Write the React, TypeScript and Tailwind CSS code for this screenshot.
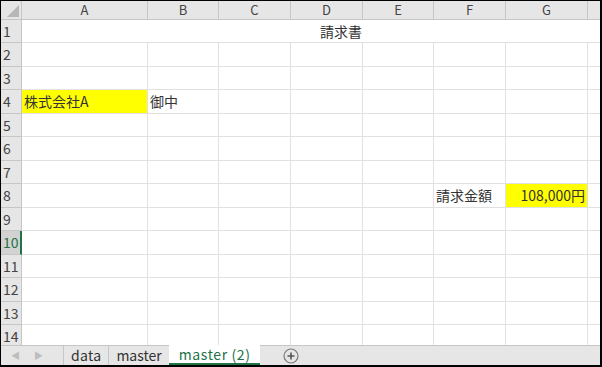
import React from "react";

const cols = [
  { name: "A", w: "w-[126px]" },
  { name: "B", w: "w-[71px]" },
  { name: "C", w: "w-[72px]" },
  { name: "D", w: "w-[72px]" },
  { name: "E", w: "w-[71px]" },
  { name: "F", w: "w-[72px]" },
  { name: "G", w: "w-[82px]" },
  { name: "", w: "w-[40px]" },
];

const font = "font-['Noto_Sans_CJK_JP','Noto_Sans',sans-serif]";

function Corner() {
  return (
    <div className="w-[21px] h-[19px] shrink-0 bg-[#e6e6e6] border-r border-b border-[#c6c6c6] relative">
      <svg className="absolute right-[2px] bottom-[2px]" width="12" height="12" viewBox="0 0 12 12">
        <path d="M12 0 L12 12 L0 12 Z" fill="#b7b7b7" />
      </svg>
    </div>
  );
}

function Cell({ row, col }: { row: number; col: number }) {
  const c = cols[col];
  let content: React.ReactNode = null;
  let bg = "bg-white";
  let align = "justify-start pl-[2px]";
  if (row === 4 && col === 0) {
    bg = "bg-[#ffff00]";
    content = "株式会社A";
  }
  if (row === 4 && col === 1) content = "御中";
  if (row === 8 && col === 5) content = "請求金額";
  if (row === 8 && col === 6) {
    bg = "bg-[#ffff00]";
    content = "108,000円";
    align = "justify-end pr-[2px]";
  }
  return (
    <div
      className={`${c.w} shrink-0 h-full flex items-center border-r border-b border-[#e1e1e1] text-[14px] text-[#333] whitespace-nowrap overflow-visible ${bg} ${align}`}
    >
      {content}
    </div>
  );
}

export default function App() {
  const rows = Array.from({ length: 14 }, (_, i) => i + 1);
  return (
    <div className={`w-[602px] h-[367px] bg-white border-l border-t border-r-2 border-b-2 border-black flex flex-col overflow-hidden ${font}`}>
      <div className="flex-1 overflow-hidden">
        {/* column header */}
        <div className="flex h-[19px]">
          <Corner />
          {cols.map((c, i) => (
            <div
              key={i}
              className={`${c.w} shrink-0 h-full bg-[#e6e6e6] border-r border-b border-[#c6c6c6] flex items-center justify-center text-[13px] text-[#444]`}
            >
              {c.name}
            </div>
          ))}
        </div>
        {rows.map((r) => {
          const h = r % 2 === 1 ? "h-[23px]" : "h-[24px]";
          const active = r === 10;
          return (
            <div key={r} className={`flex ${h}`}>
              <div
                className={`w-[21px] shrink-0 h-full flex items-center pl-[2px] text-[14px] border-b ${
                  active
                    ? "bg-[#d2d2d2] text-[#217346] border-r-2 border-r-[#217346] border-b-[#c6c6c6]"
                    : "bg-[#e6e6e6] text-[#444] border-r border-[#c6c6c6]"
                }`}
              >
                {r}
              </div>
              {r === 1 ? (
                <div className="relative flex-1 h-full border-b border-[#e1e1e1] flex items-center text-[14px] text-[#333]">
                  <span className="pl-[298px]">請求書</span>
                </div>
              ) : (
                cols.map((_, ci) => <Cell key={ci} row={r} col={ci} />)
              )}
            </div>
          );
        })}
      </div>
      {/* sheet tabs */}
      <div className="h-[20px] shrink-0 bg-[#e6e6e6] border-t border-[#c6c6c6] flex items-stretch text-[14px]">
        <div className="w-[62px] flex items-center pl-[10px] gap-[14px] text-[#bdbdbd] text-[9px]">
          <span>◀</span>
          <span>▶</span>
        </div>
        <div className="flex items-center px-[7px] border-l border-[#c6c6c6] text-[#333] tracking-[0.3px]">data</div>
        <div className="flex items-center px-[7px] border-l border-[#c6c6c6] text-[#333]">master</div>
        <div className="flex items-center px-[10px] bg-white text-[#217346] border-b-2 border-[#217346] -mt-px tracking-[0.6px]">
          master (2)
        </div>
        <div className="flex items-center pl-[23px]">
          <svg width="16" height="16" viewBox="0 0 16 16">
            <circle cx="8" cy="8" r="7" fill="none" stroke="#7a7a7a" strokeWidth="1.2" />
            <path d="M8 4.5 V11.5 M4.5 8 H11.5" stroke="#555" strokeWidth="1.6" />
          </svg>
        </div>
      </div>
    </div>
  );
}
